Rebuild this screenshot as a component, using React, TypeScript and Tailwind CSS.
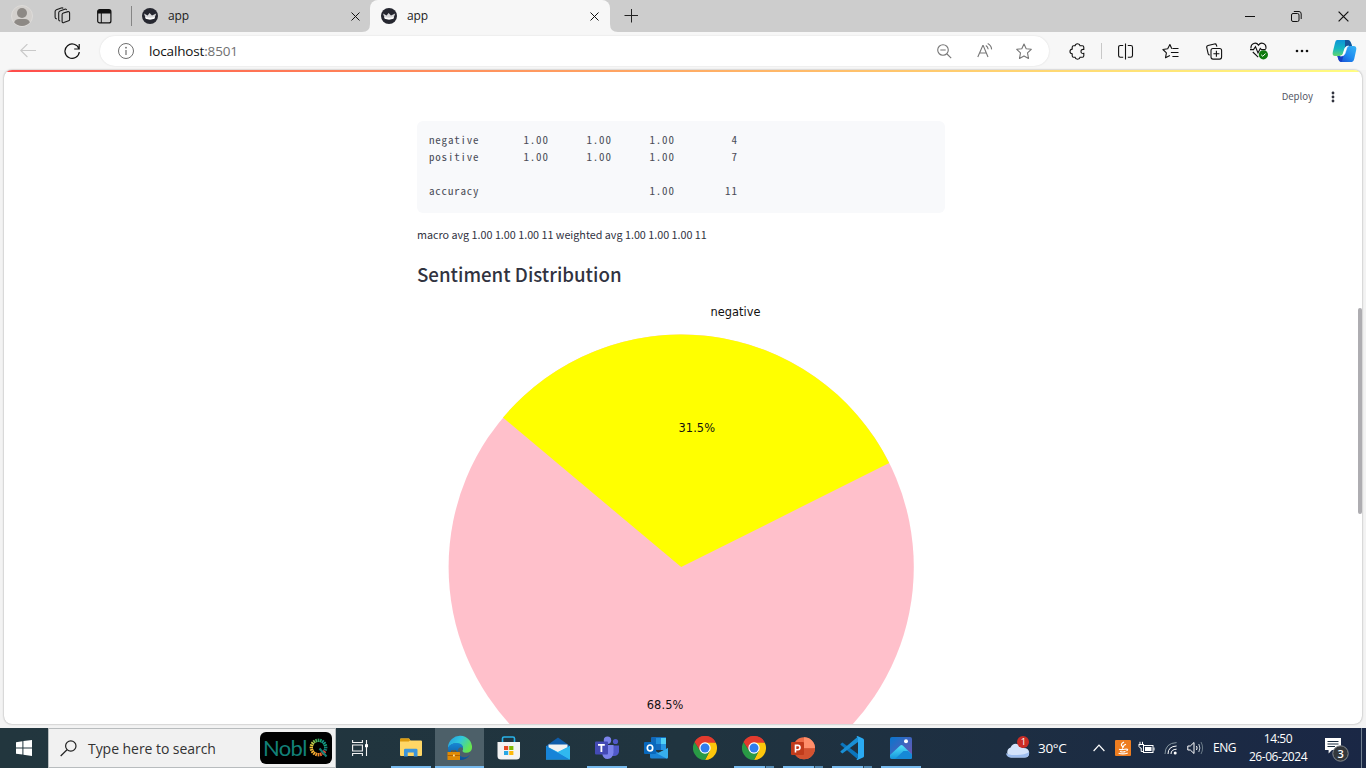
import React from "react";

type SvgProps = { w: number; h: number; className?: string; children: React.ReactNode };

function Svg({ w, h, className = "", children }: SvgProps) {
  return (
    <svg width={w} height={h} viewBox={`0 0 ${w} ${h}`} fill="none" className={`block shrink-0 ${className}`}>
      {children}
    </svg>
  );
}

function Favicon() {
  return (
    <Svg w={16} h={16}>
      <circle cx="8" cy="8" r="8" fill="#262730" />
      <path d="M2 5.6 L5.6 7.4 L7.6 5 L10 7.4 L14.2 5.6 L12.4 10.6 Q8 12.2 3.8 10.6 Z" fill="#d9d9db" />
      <path d="M3.2 9 Q8 10.4 12.9 9 L12.3 10.8 Q8 12.2 3.8 10.8 Z" fill="#fff" />
    </Svg>
  );
}

function CloseIcon({ size = 9 }: { size?: number }) {
  return (
    <svg width={size} height={size} viewBox="0 0 9 9" className="block shrink-0">
      <path d="M0.5 0.5 L8.5 8.5 M8.5 0.5 L0.5 8.5" stroke="#111" strokeWidth="1" />
    </svg>
  );
}

function TabStrip() {
  return (
    <div className="flex h-8 w-full items-center bg-[#cdcdcd]">
      <div className="ml-[11px] mr-[21px]">
        <Svg w={22} h={22}>
          <circle cx="11" cy="11" r="10.5" fill="#d3d0cd" stroke="#dddbd9" />
          <circle cx="11" cy="8" r="5" fill="#8d8985" />
          <path d="M3.2 17.5 Q4 14 8 14 H14 Q18 14 18.8 17.5 A10.5 10.5 0 0 1 3.2 17.5Z" fill="#8d8985" />
        </Svg>
      </div>
      <Svg w={18} h={18} className="mr-[25px]">
        <g stroke="#1a1a1a" strokeWidth="1.1" strokeLinejoin="round">
          <path d="M9.4 6 L14 4.6 Q15.6 4.4 15.6 6 V12.4 Q15.6 13.4 14.6 13.8 L9.8 15.6 Q8.2 16 8.1 14.6 V7.5 Q8.2 6.4 9.4 6Z" fill="#cdcdcd" />
          <path d="M12.6 3 Q12.2 1.7 10.8 2.2 L6 3.9 Q4.7 4.4 4.7 5.8 V12.6 Q4.8 14 6.2 13.9" />
          <path d="M9.2 1.4 Q8.6 .5 7.2 1 L2.4 2.7 Q1.1 3.2 1.1 4.6 V10.2 Q1.1 11.8 2.8 11.9" />
        </g>
      </Svg>
      <Svg w={15} h={15}>
        <rect x="0.7" y="0.7" width="13.2" height="13.2" rx="2" stroke="#111" strokeWidth="1.2" />
        <path d="M0.7 4.4 V2.6 Q0.7 .7 2.6 .7 H12 Q13.9 .7 13.9 2.6 V4.4Z" fill="#111" />
        <path d="M4.3 4 V14" stroke="#111" strokeWidth="1" />
      </Svg>
      <div className="ml-[19px] h-5 w-px bg-[#858585]" />
      <div className="flex h-8 w-[238px] items-center pl-[10px] pr-[10px]">
        <Favicon />
        <span className="ml-[10px] flex-1 text-[12px] tracking-[-0.1px] text-[#1b1b1b]">app</span>
        <CloseIcon />
      </div>
      <div className="relative flex h-8 w-[240px] items-center rounded-t-lg bg-[#f7f7f7] pl-[11px] pr-[11px]">
        <svg width="8" height="8" className="absolute -left-2 bottom-0"><path d="M8 0 V8 H0 Q8 8 8 0Z" fill="#f7f7f7" /></svg>
        <svg width="8" height="8" className="absolute -right-2 bottom-0"><path d="M0 0 V8 H8 Q0 8 0 0Z" fill="#f7f7f7" /></svg>
        <Favicon />
        <span className="ml-[10px] flex-1 text-[12px] tracking-[-0.1px] text-[#1b1b1b]">app</span>
        <CloseIcon />
      </div>
      <Svg w={14} h={14} className="ml-[14px]">
        <path d="M.5 6.5 H14 M7.5 0 V13.5" stroke="#222" />
      </Svg>
      <div className="ml-auto mr-[17px] flex items-center gap-9">
        <Svg w={10} h={10}><path d="M0 5.5 H10" stroke="#111" /></Svg>
        <Svg w={11} h={11}>
          <rect x="0.5" y="2.5" width="7.5" height="8" rx="1.5" stroke="#111" />
          <path d="M2.8 .5 H8 Q10.2 .5 10.2 3 V8" stroke="#111" />
        </Svg>
        <CloseIcon size={11} />
      </div>
    </div>
  );
}

function Copilot() {
  return (
    <Svg w={25} h={24}>
      <defs>
        <linearGradient id="cpA" x1="0" y1="0" x2="0" y2="1"><stop offset="0" stopColor="#0d93d8" /><stop offset=".55" stopColor="#16b7c0" /><stop offset="1" stopColor="#63d66f" /></linearGradient>
        <linearGradient id="cpB" x1="0" y1="1" x2="1" y2="0"><stop offset="0" stopColor="#1746cf" /><stop offset=".5" stopColor="#1f8bf0" /><stop offset="1" stopColor="#38b6f5" /></linearGradient>
      </defs>
      <path d="M5 1 H16 Q18 1 19 4 L20 7 H16 Q13.5 7 12.8 9.5 L11 15 Q10.5 17 8 17 H3 Q0 17 0.8 13 L3 4 Q3.6 1 5 1Z" fill="url(#cpA)" />
      <path d="M13 1 H16 Q18 1 19 4 L20 7 H16 Q14 7 13 9Z" fill="#16559a" />
      <path d="M20 23 H9 Q7 23 6.3 20 L5.4 17 H9 Q11.4 17 12.2 14.5 L13.8 9 Q14.6 7 17 7 H21.5 Q25 7 24.2 11 L22.2 20 Q21.5 23 20 23Z" fill="url(#cpB)" />
      <path d="M5.4 17 H9 Q11.4 17 12.2 14.5 L10.3 21 Q9.8 23 9 23 Q7 23 6.3 20Z" fill="#1640c4" />
      <path d="M16.5 7 Q13.5 7 12.8 9.5 L11 15 Q10.5 17 8.5 17 Q12 17.4 13 14.5 L14.8 9 Q15.2 7 16.5 7Z" fill="#fff" stroke="#fff" strokeWidth=".6" />
    </Svg>
  );
}

function Toolbar() {
  return (
    <div className="flex h-[38px] w-full items-center bg-[#f7f7f7]">
      <Svg w={16} h={14} className="ml-5">
        <path d="M16 6.5 H.8 M7.4 0 L.8 6.5 L7.4 13" stroke="#c9c9c9" strokeWidth="1.1" />
      </Svg>
      <Svg w={16} h={17} className="ml-7">
        <path d="M15 6 A7.2 7.2 0 1 0 15.3 9 M15.2 1 V6 H10.2" stroke="#111" strokeWidth="1.2" />
      </Svg>
      <div className="ml-5 flex h-[30px] w-[949px] items-center rounded-full bg-white pl-[18px] pr-[17px] shadow-[0_0_2px_rgba(0,0,0,0.12)]">
        <Svg w={16} h={16}>
          <circle cx="8" cy="8" r="7.5" stroke="#6f6f6f" />
          <path d="M8 7 V12" stroke="#6f6f6f" strokeWidth="1.2" /><circle cx="8" cy="4.7" r=".9" fill="#6f6f6f" />
        </Svg>
        <span className="ml-[15px] flex-1 text-[13.5px] tracking-[-0.15px] text-[#111]">localhost<span className="text-[#707070]">:8501</span></span>
        <Svg w={15} h={15} className="mr-[25px]">
          <circle cx="6" cy="6" r="5.3" stroke="#777" strokeWidth="1.1" /><path d="M3.3 6 H8.7 M10 10 L14.2 14.2" stroke="#777" strokeWidth="1.1" />
        </Svg>
        <Svg w={16} h={16} className="mr-[22px]">
          <path d="M.8 14 L5.8 2.5 H6.2 L11 14 M2.4 10 H9.4 M8.8 2.4 Q10.9 3.6 11.2 6.2 M10.7 .6 Q14.4 2.6 14.6 6.4" stroke="#777" strokeWidth="1.1" />
        </Svg>
        <Svg w={17} h={17}>
          <path d="M9 1 L11.2 5.7 L16.3 6.3 L12.5 9.8 L13.5 15.4 L9 12.9 L4.5 15.4 L5.5 9.8 L1.7 6.3 L6.8 5.7Z" stroke="#777" strokeWidth="1.1" strokeLinejoin="round" />
        </Svg>
      </div>
      <Svg w={16} h={17} className="ml-5">
        <path d="M6 2.8 Q6.3 .7 8.6 .7 Q10.8 .7 11.1 2.8 H13.4 Q14.8 2.8 14.8 4.2 V6.4 Q12 6.1 12 8.4 Q12 10.8 14.8 10.4 V12.8 Q14.8 14.2 13.4 14.2 H11.1 Q10.8 16.2 8.6 16.2 Q6.3 16.2 6 14.2 H4.6 Q3.2 14.2 3.2 12.8 V10.9 Q1 10.6 1 8.5 Q1 6.4 3.2 6.1 V4.2 Q3.2 2.8 4.6 2.8Z" stroke="#111" strokeWidth="1.1" />
      </Svg>
      <div className="ml-4 h-4 w-px bg-[#c8c8c8]" />
      <Svg w={16} h={17} className="ml-4">
        <path d="M7.5 .5 V16.5 M5.2 2.5 H2.3 Q.6 2.5 .6 4.3 V12.5 Q.6 14.2 2.3 14.2 H5.2 M9.8 2.5 H12.7 Q14.5 2.5 14.5 4.3 V12.5 Q14.5 14.2 12.7 14.2 H9.8" stroke="#111" strokeWidth="1.1" />
      </Svg>
      <Svg w={17} h={17} className="ml-7">
        <path d="M9.8 5.7 L7.9 1.5 L5.7 5.8 L.9 6.5 L4.4 9.8 L3.5 14.8 L7.9 12.6" stroke="#111" strokeWidth="1.1" strokeLinejoin="round" />
        <path d="M10.4 5.5 H16.5 M8.9 9.5 H16.5 M10.4 13.5 H16.5" stroke="#111" strokeWidth="1.1" />
      </Svg>
      <Svg w={17} h={17} className="ml-[27px]">
        <path d="M10.9 3.6 L10.4 2 Q10 .6 8.4 1 L2 2.5 Q.4 3 .7 4.5 L2.2 10.8 Q2.6 12 3.8 12" stroke="#111" strokeWidth="1.1" />
        <rect x="5" y="5.5" width="10.6" height="10.6" rx="2" stroke="#111" strokeWidth="1.1" />
        <path d="M10.4 7.8 V13.8 M7.4 10.8 H13.4" stroke="#111" strokeWidth="1.1" />
      </Svg>
      <Svg w={19} h={18} className="ml-[27px]">
        <path d="M1 6.5 C0.4 1 6.3 -.4 8.5 3.2 C10.7 -.4 17 1 15.8 7 M0 7.6 H3.5 L5.5 4.7 L8 11 L10.3 6.4 L11.5 7.6 H15.7 M2.8 10 L8.2 15.2" stroke="#111" strokeWidth="1.1" />
        <circle cx="13.4" cy="12.8" r="4.6" fill="#0e7a0d" /><path d="M11.2 12.8 L12.8 14.3 L15.6 11.5" stroke="#fff" />
      </Svg>
      <Svg w={14} h={4} className="ml-[26px]">
        <circle cx="2" cy="2" r="1.3" fill="#111" /><circle cx="7" cy="2" r="1.3" fill="#111" /><circle cx="12" cy="2" r="1.3" fill="#111" />
      </Svg>
      <div className="ml-auto mr-[9px]"><Copilot /></div>
    </div>
  );
}

const report = `negative       1.00      1.00      1.00         4
positive       1.00      1.00      1.00         7

accuracy                           1.00        11`;

function Pie() {
  const cx = 264.2, cy = 262.1, r = 232.6;
  const at = (deg: number) => {
    const a = (deg * Math.PI) / 180;
    return `${(cx + r * Math.cos(a)).toFixed(2)} ${(cy - r * Math.sin(a)).toFixed(2)}`;
  };
  return (
    <svg width="528" height="500" viewBox="0 0 528 500" className="block shrink-0 font-['DejaVu_Sans',sans-serif]">
      <circle cx={cx} cy={cy} r={r} fill="#ffc0cb" />
      <path d={`M${cx} ${cy} L${at(26.6)} A${r} ${r} 0 0 0 ${at(140)}Z`} fill="#ffff00" />
      <text x="293.5" y="11" fontSize="11.4" textLength="50" fill="#111">negative</text>
      <text x="261.5" y="127" fontSize="11.4" textLength="36.5" fill="#111">31.5%</text>
      <text x="229.8" y="404" fontSize="11.4" textLength="36.5" fill="#111">68.5%</text>
    </svg>
  );
}

function Page() {
  return (
    <div className="flex h-[658px] w-full flex-col bg-[#f3f3f3] px-1 pb-1">
      <div className="relative flex h-[654px] w-[1358px] flex-col overflow-hidden rounded-lg bg-white font-['Noto_Sans_CJK_JP','Noto_Sans',sans-serif] shadow-[0_0_2px_rgba(0,0,0,0.4)]">
        <div className="h-0.5 w-full shrink-0 bg-linear-to-r from-[#ff4b4b] to-[#fffd80]" />
        <div className="flex h-[49px] shrink-0 items-center justify-end pr-[27px]">
          <span className="mr-[18px] text-[9.6px] text-[#555867]">Deploy</span>
          <Svg w={4} h={12}>
            <circle cx="2" cy="2" r="1.4" fill="#31333f" /><circle cx="2" cy="6" r="1.4" fill="#31333f" /><circle cx="2" cy="10" r="1.4" fill="#31333f" />
          </Svg>
        </div>
        <div className="ml-[413px] flex w-[528px] flex-col">
          <pre className="h-[92px] rounded-md bg-[#f8f9fb] px-3 pt-[10px] font-['Noto_Sans_Mono_CJK_JP','DejaVu_Sans_Mono',monospace] text-[11px] leading-[17px] tracking-[0.8px] text-[#4b4d58]">{report}</pre>
          <p className="mt-[13px] h-[17px] whitespace-nowrap text-[10.75px] leading-[17px] text-[#31333f]">macro avg 1.00 1.00 1.00 11 weighted avg 1.00 1.00 1.00 11</p>
          <h3 className="mt-[15px] h-8 whitespace-nowrap text-[18.7px] font-medium leading-8 text-[#31333f]">Sentiment Distribution</h3>
          <div className="mt-[15px]"><Pie /></div>
        </div>
        <div className="absolute right-0 top-[238px] h-[206px] w-1 rounded-full bg-[#aeadb1]" />
      </div>
    </div>
  );
}

function Explorer() {
  return (
    <Svg w={22} h={20}>
      <path d="M0 1.5 Q0 .5 1 .5 H9 L10.5 2.5 H21 Q22 2.5 22 3.5 V17 Q22 18 21 18 H1 Q0 18 0 17Z" fill="#ffd766" />
      <path d="M0 1.5 Q0 .5 1 .5 H9 L10.2 2.2 L8.8 3.6 H0Z" fill="#dc9a0d" />
      <path d="M4 18.5 V12 Q4 10.7 5.3 10.7 H16.2 Q17.5 10.7 17.5 12 V18.5 H13.8 V14.5 H7.7 V18.5Z" fill="#3b95dc" />
    </Svg>
  );
}

function Edge() {
  return (
    <Svg w={26} h={26}>
      <defs>
        <linearGradient id="edA" x1="0" y1="0" x2="1" y2=".5"><stop offset="0" stopColor="#249ce0" /><stop offset=".5" stopColor="#30c6dd" /><stop offset="1" stopColor="#66e650" /></linearGradient>
        <linearGradient id="edB" x1="0" y1="0" x2="0" y2="1"><stop offset="0" stopColor="#1688d5" /><stop offset="1" stopColor="#0d4e94" /></linearGradient>
      </defs>
      <path d="M1 12 A12 11.7 0 0 1 25 13 Q24.5 17.8 19 17.8 Q14.2 17.6 16 14.5 Q16.6 9 10.5 8.4 Q4 8 1 13Z" fill="url(#edA)" />
      <path d="M1 12.5 Q4 7.7 10 8 Q16 8.4 16 13 Q12 11 10.8 15 Q9.8 19.8 14.8 21.8 Q19 23.2 23.4 19.4 Q19.6 25 13 25 Q1 24 1 12.5Z" fill="url(#edB)" />
      <rect x=".5" y="17" width="12.5" height="8" rx=".6" fill="#e08a06" /><path d="M.5 20.5 H13" stroke="#a75800" strokeWidth=".8" /><path d="M4.5 17 V16 H9 V17" stroke="#965000" /><rect x="6" y="19.6" width="1.8" height="1.8" fill="#ffe09a" />
    </Svg>
  );
}

function Store() {
  return (
    <Svg w={24} h={24}>
      <path d="M5.5 6 V2.5 Q5.5 1 7 1 H16 Q17.5 1 17.5 2.5 V6" stroke="#28b3e9" strokeWidth="1.6" />
      <path d="M.5 6 H23 V20 Q23 23.5 19.5 23.5 H4 Q.5 23.5 .5 20Z" fill="#f3f3f3" />
      <path d="M7 10 H11.2 V14 H7Z" fill="#e74a23" /><path d="M12.2 10 H16.4 V14 H12.2Z" fill="#80b900" /><path d="M7 15 H11.2 V19 H7Z" fill="#28a7e5" /><path d="M12.2 15 H16.4 V19 H12.2Z" fill="#fdb90a" />
    </Svg>
  );
}

function Mail() {
  return (
    <Svg w={24} h={23}>
      <path d="M0 9 L12 .5 L24 9 V13 H0Z" fill="#0f5ca9" />
      <path d="M2.5 7.5 H21.5 V13 L12 16 L2.5 13Z" fill="#f2f2f2" />
      <path d="M0 9 L12 15 L24 9 V22.5 H0Z" fill="#33bdf2" />
      <path d="M0 9 L24 22.5 H0Z" fill="#1784d8" /><path d="M12 15 L24 9 V22.5Z" fill="#30b8ef" />
    </Svg>
  );
}

function Teams() {
  return (
    <Svg w={24} h={24}>
      <circle cx="20.5" cy="5.5" r="2.6" fill="#5059c9" /><path d="M15 9.5 H24 V16 Q23 20 19 20 H15Z" fill="#5059c9" />
      <circle cx="12.5" cy="4.2" r="3.7" fill="#7b83eb" /><path d="M7 9 H18.5 V16.5 Q18 22.5 12.5 23 Q8 23 7 17Z" fill="#7b83eb" />
      <rect x="0" y="5.6" width="13" height="13" rx="1" fill="#444ab5" /><path d="M3 8.9 H9.8 M6.4 9 V16" stroke="#fff" strokeWidth="1.8" />
    </Svg>
  );
}

function Outlook() {
  return (
    <Svg w={24} h={23}>
      <path d="M7 1 Q7 0 8 0 H22 V12 H7Z" fill="#1168b9" /><path d="M12 1 H17 V7 H12Z" fill="#2190dc" /><path d="M17 1 H22 V7 H17Z" fill="#50d0f5" /><path d="M12 7 H17 V13 H12Z" fill="#1269bc" /><path d="M17 7 H22 V13 H17Z" fill="#2696e2" />
      <path d="M6 11 L15 16 L24 11 V20 Q24 21.5 22.5 21.5 H7.5 Q6 21.5 6 20Z" fill="#1b83d5" /><path d="M24 11 V20 Q24 21.5 22.5 21.5 L13 16.5Z" fill="#37aeeb" />
      <rect x="0" y="5" width="12" height="12" rx="1" fill="#0868bd" /><ellipse cx="6" cy="11" rx="2.7" ry="3" stroke="#fff" strokeWidth="1.7" />
    </Svg>
  );
}

function Chrome() {
  return (
    <Svg w={24} h={24}>
      <path d="M12 12 L1.6 6 A12 12 0 0 1 22.4 6Z" fill="#e33b2e" />
      <path d="M12 6.5 H22.7 A12 12 0 0 1 12 24 L16.8 14.7Z" fill="#fdc60b" />
      <path d="M1.6 6 A12 12 0 0 0 12 24 L16.8 14.7 L12 12 L7.2 14.7Z" fill="#299a45" />
      <path d="M1.6 6 L7.2 14.8 L12 6.5 H22.7 A12 12 0 0 0 1.6 6Z" fill="#e33b2e" />
      <circle cx="12" cy="12" r="5.7" fill="#fff" /><circle cx="12" cy="12" r="4.5" fill="#2f7ded" />
    </Svg>
  );
}

function PowerPoint() {
  return (
    <Svg w={24} h={23}>
      <circle cx="13" cy="11.3" r="11" fill="#ed6c47" /><path d="M13 .3 A11 11 0 0 1 24 11.3 H13Z" fill="#ff8f6b" /><path d="M2 11.3 H24 A11 11 0 0 1 2 11.3Z" fill="#d35230" />
      <rect x="0" y="5" width="13" height="13" rx="1" fill="#c13b1b" /><path d="M4.5 15.5 V8.4 H6.8 Q9 8.4 9 10.5 Q9 12.7 6.8 12.7 H4.5" stroke="#fff" strokeWidth="1.6" />
    </Svg>
  );
}

function VSCode() {
  return (
    <Svg w={24} h={24}>
      <path d="M.5 8 L2.4 6.4 L18 18 V23.6 L.5 8.8Z" fill="#0b75bd" /><path d="M.5 16 L2.4 17.6 L18 6 V.4 L.5 15.2Z" fill="#198fd5" />
      <path d="M17.5 0 L23 2.5 Q24 3 24 4 V20 Q24 21 23 21.5 L17.5 24 Q16.8 24 16.5 23.5 L18 22 V2 L16.5 .5Z" fill="#2aaaf2" />
    </Svg>
  );
}

function Photos() {
  return (
    <Svg w={22} h={22}>
      <defs><linearGradient id="phA" x1="0" y1="0" x2="1" y2="1"><stop stopColor="#0876cd" /><stop offset="1" stopColor="#7653b1" /></linearGradient><linearGradient id="phB" x1="0" y1="0" x2="0" y2="1"><stop stopColor="#51e1fa" /><stop offset="1" stopColor="#1595dc" /></linearGradient></defs>
      <rect width="22" height="22" rx="2" fill="url(#phA)" /><path d="M0 18 L10 8.7 Q11.5 7.5 13 8.7 L22 17.5 V20 Q22 22 20 22 H2 Q0 22 0 20Z" fill="url(#phB)" /><path d="M5 22 L13.5 14 L18 14 L22 17.5 V20 Q22 22 20 22Z" fill="#1689d6" /><circle cx="16" cy="4.3" r="2" fill="#fff" />
    </Svg>
  );
}

function TaskView() {
  return (
    <Svg w={17} h={16}>
      <path d="M.6 0 V2.5 H10.4 V0 M.6 16 V13.5 H10.4 V16 M.6 5 H10.4 V11 H.6Z M14.5 0 V16" stroke="#f4f4f4" strokeWidth="1.1" /><rect x="13" y="4.2" width="3" height="3" fill="#fff" />
    </Svg>
  );
}

type TaskProps = { children: React.ReactNode; bar?: "full" | "split"; active?: boolean };

function Task({ children, bar, active }: TaskProps) {
  return (
    <div className={`flex h-10 w-[49px] shrink-0 flex-col items-center ${active ? "bg-[#4d6069]" : ""}`}>
      <div className="flex h-[38px] items-center pt-0.5">{children}</div>
      {bar && (
        <div className={`flex h-0.5 ${active ? "w-full" : "w-10"} bg-[#76b9ed]`}>
          {bar === "split" && <div className="ml-auto h-0.5 w-[9px] border-l border-[#27445a] bg-[#558bb3]" />}
        </div>
      )}
    </div>
  );
}

function NoblBadge() {
  const colors = ["#33a764", "#17a674", "#139485", "#139485", "#13a77c", "#13877c", "#128078", "#e2463a", "#ed5335", "#ef6a2d", "#ef8a2b", "#f39b2b", "#f3ab32", "#f3b332", "#eebb3c", "#f0c43a", "#e4cf43", "#bcc84a", "#82bd52", "#4fb05a"];
  return (
    <div className="flex h-8 w-[72px] items-center rounded-md bg-black pl-[3px]">
      <span className="w-[46px] font-['Lato',sans-serif] text-[22px] leading-8 tracking-[-0.7px] text-[#128078]">Nobl</span>
      <Svg w={21} h={22}>
        {colors.map((color, i) => (
          <path key={i} d="M9.5 1.6 V5" stroke={color} strokeWidth="1.7" transform={`rotate(${(i * 360) / 20} 9.5 10.5)`} />
        ))}
        <path d="M10.5 11.5 L17.5 19.5" stroke="#128078" strokeWidth="2" />
      </Svg>
    </div>
  );
}

function Tray() {
  return (
    <div className="ml-auto flex h-10 items-center text-white">
      <Svg w={25} h={26}>
        <path d="M6 22.5 A5.3 5.3 0 0 1 5.6 12.5 Q8 7.5 13 9.3 Q15.6 10 17 13 Q24 12.3 24.2 18 Q24.1 22.5 19.5 22.5Z" fill="#d3e3fb" />
        <path d="M1 18 Q4 20.5 12 20 Q20 20 24 17 Q24.5 22.5 19.5 22.5 H6 Q1.4 22.3 1 18Z" fill="#9dbdee" />
        <circle cx="18" cy="7" r="6" fill="#ca2c25" /><text x="15.8" y="10.4" fontSize="9.5" fill="#fff">1</text>
      </Svg>
      <span className="ml-2 w-[55px] text-[13.5px] tracking-[-0.3px]">30°C</span>
      <Svg w={12} h={8}><path d="M.6 7 L6 1.2 L11.4 7" stroke="#fff" strokeWidth="1.2" /></Svg>
      <Svg w={16} h={16} className="ml-[10px]">
        <rect width="16" height="16" rx="1" fill="#ee7d20" />
        <path d="M9 2 Q4.6 4.5 7.5 6.4 Q8.5 7.2 7 8.5 M11 4.3 Q7.4 5.7 8.8 7.4 M4 9.3 Q6 10.2 11 9 M11 9 Q14 9 11.5 11 M5 11.5 Q8 12.5 10.5 11.4 M3.6 13.2 Q8 14.8 12.8 13" stroke="#fff" strokeWidth="1.2" />
      </Svg>
      <Svg w={17} h={14} className="ml-[7px]">
        <path d="M.5 3.5 H6 M2 3.5 V.8 M4.5 3.5 V.8 M1 4 V5.5 Q1.5 7 3.2 7 V10.5 H5" stroke="#fff" strokeWidth="1" /><rect x="5.5" y="4.5" width="9.5" height="7" stroke="#fff" /><rect x="7" y="6" width="6.5" height="4" fill="#fff" /><path d="M16 6.5 V9.5" stroke="#fff" />
      </Svg>
      <Svg w={13} h={14} className="ml-[9px]">
        <path d="M1 13 Q1.2 2 12.6 1.6" stroke="#8696a0" /><path d="M4 13 Q4 5.4 12.6 5 M7 13 Q7 8.4 12.6 8.2" stroke="#fff" /><circle cx="11.2" cy="12" r="1.5" fill="#fff" />
      </Svg>
      <Svg w={17} h={14} className="ml-[10px]">
        <path d="M.8 5 H3.3 L7 1.5 V12.5 L3.3 9 H.8Z M9.5 5 Q10.7 7 9.5 9" stroke="#fff" strokeWidth="1" /><path d="M11.8 3 Q14 7 11.8 11" stroke="#c4cdd4" strokeWidth="1" /><path d="M14 1 Q17.2 7 14 13" stroke="#6b7b88" strokeWidth="1" />
      </Svg>
      <span className="ml-[9px] w-[24px] text-[12px] tracking-[-0.5px]">ENG</span>
      <div className="ml-[11px] flex w-[60px] flex-col items-center whitespace-nowrap pb-px text-[12px] leading-[18px] tracking-[-0.45px]">
        <span>14:50</span>
        <span>26-06-2024</span>
      </div>
      <div className="ml-[17px] mr-[11px] mt-1">
        <Svg w={25} h={26}>
          <path d="M0 1 H16 V13 H7 L3.6 16.5 V13 H0Z" fill="#fff" /><path d="M2.5 4.5 H13.5 M2.5 7 H13.5 M2.5 9.5 H10" stroke="#1a2d3f" />
          <circle cx="15.5" cy="16.5" r="7.7" fill="#33373b" stroke="#858a8e" /><text x="12.4" y="20.5" fontSize="11" fontWeight="600" fill="#fff">3</text>
        </Svg>
      </div>
      <div className="mr-1 h-10 w-px bg-[#718090]" />
    </div>
  );
}

function Taskbar() {
  return (
    <div className="flex h-10 w-full items-center bg-linear-to-r from-[#22363e] via-[#20343f] to-[#1a2745]">
      <div className="flex h-10 w-12 items-center justify-center">
        <Svg w={16} h={16}>
          <path d="M0 2.3 L6.4 1.3 V7.4 H0Z M7.4 1.1 L16 0 V7.4 H7.4Z M0 8.4 H6.4 V14.6 L0 13.7Z M7.4 8.4 H16 V16 L7.4 14.8Z" fill="#fff" />
        </Svg>
      </div>
      <div className="flex h-10 w-72 items-center border border-[#b8bcbe] bg-[#f1f1f1] pl-[11px] pr-[3px]">
        <Svg w={17} h={17}><circle cx="10.8" cy="6" r="5.2" stroke="#222" strokeWidth="1.2" /><path d="M7 9.8 L.7 16" stroke="#222" strokeWidth="1.2" /></Svg>
        <span className="ml-[11px] flex-1 text-[14px] tracking-[-0.05px] text-[#333]">Type here to search</span>
        <NoblBadge />
      </div>
      <div className="flex h-10 w-[50px] items-center justify-center pr-px"><TaskView /></div>
      <Task bar="full"><Explorer /></Task>
      <Task bar="full" active><Edge /></Task>
      <Task><Store /></Task>
      <Task><Mail /></Task>
      <Task bar="full"><Teams /></Task>
      <Task><Outlook /></Task>
      <Task><Chrome /></Task>
      <Task bar="split"><Chrome /></Task>
      <Task bar="split"><PowerPoint /></Task>
      <Task bar="split"><VSCode /></Task>
      <Task bar="full"><Photos /></Task>
      <Tray />
    </div>
  );
}

export default function App() {
  return (
    <div className="flex h-[768px] w-[1366px] flex-col overflow-hidden bg-white font-['Open_Sans','Noto_Sans',sans-serif]">
      <TabStrip />
      <Toolbar />
      <Page />
      <Taskbar />
    </div>
  );
}
